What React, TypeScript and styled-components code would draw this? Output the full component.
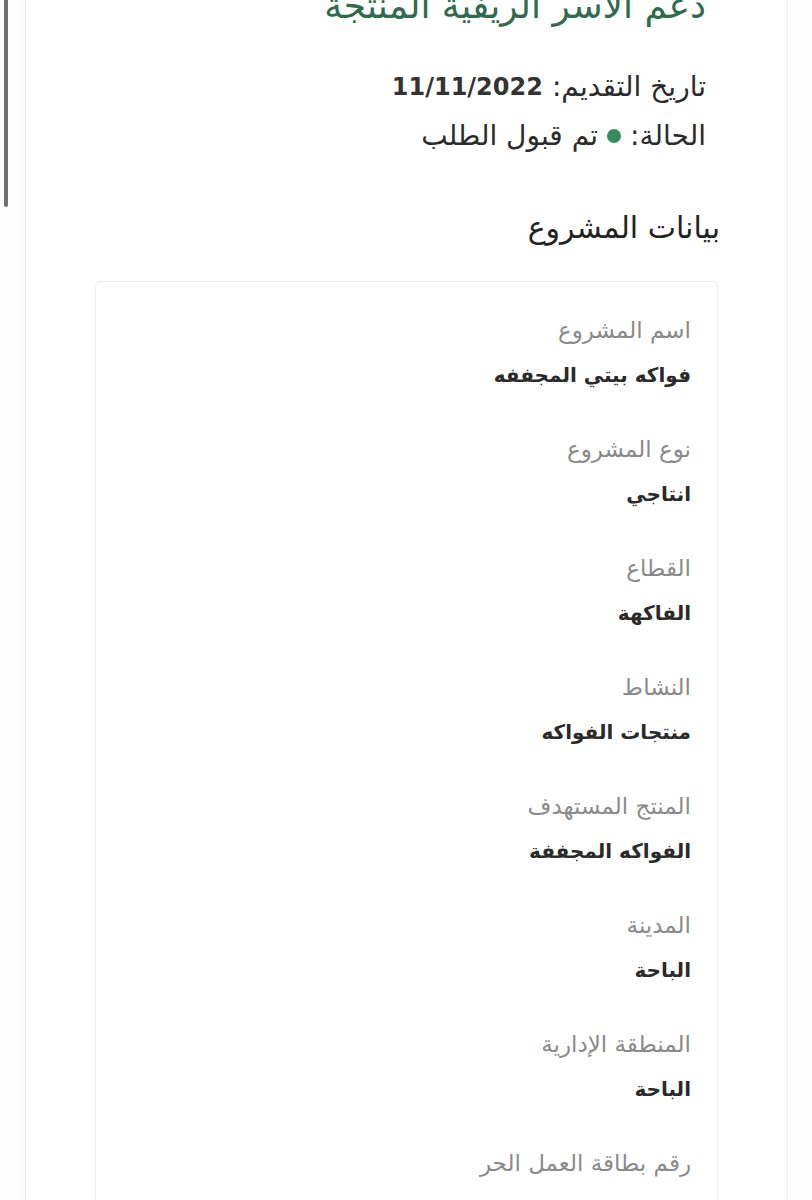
import styled, { createGlobalStyle } from 'styled-components'

const GlobalStyle = createGlobalStyle`
  html, body {
    margin: 0;
    padding: 0;
    background: #ffffff;
  }
  body {
    font-family: "DejaVu Sans", sans-serif;
    overflow: hidden;
  }
`

const Page = styled.div`
  position: relative;
  width: 812px;
  height: 1200px;
  overflow: hidden;
  background: #fdfdfd;
  direction: rtl;
`

const ScrollThumb = styled.div`
  position: absolute;
  top: 0;
  left: 4px;
  width: 4px;
  height: 207px;
  background: #707070;
  border-radius: 0 0 3px 3px;
`

const Card = styled.main`
  margin: 0 24px 0 25px;
  min-height: 1300px;
  background: #ffffff;
  border-left: 1px solid #ececec;
  border-right: 1px solid #ececec;
  box-shadow: 0 0 4px rgba(0, 0, 0, 0.04);
  padding: 0 69px;
`

const Title = styled.h1`
  margin: -16px 12px 0 0;
  font-size: 36px;
  line-height: 44px;
  font-weight: 400;
  color: #2f6b4e;
`

const Meta = styled.div`
  margin: 41px 12px 0 0;
  display: flex;
  flex-direction: column;
  gap: 13px;
`

const MetaLine = styled.div`
  display: flex;
  align-items: center;
  gap: 9px;
  font-size: 28px;
  line-height: 36px;
  color: #2b2b2b;
`

const Digits = styled.span`
  font-size: 24px;
  font-weight: 700;
  color: #333333;
`

const Dot = styled.span`
  display: inline-block;
  width: 14px;
  height: 14px;
  border-radius: 50%;
  background: #3b8a5c;
`

const SectionTitle = styled.h2`
  margin: 56px -2px 0 0;
  font-size: 30px;
  line-height: 36px;
  font-weight: 400;
  color: #222222;
`

const InfoCard = styled.section`
  margin-top: 35px;
  border: 1px solid #ededed;
  border-radius: 6px;
  box-shadow: 0 1px 3px rgba(0, 0, 0, 0.04);
  padding: 35px 26px 40px;
  display: flex;
  flex-direction: column;
  gap: 48px;
`

const Field = styled.div`
  display: flex;
  flex-direction: column;
  gap: 19px;
`

const Label = styled.span`
  font-size: 23px;
  line-height: 26px;
  color: #8a8a8a;
`

const Value = styled.span`
  font-size: 20px;
  line-height: 26px;
  font-weight: 700;
  color: #2a2a2a;
`

const fields = [
  { label: 'اسم المشروع', value: 'فواكه بيتي المجففه' },
  { label: 'نوع المشروع', value: 'انتاجي' },
  { label: 'القطاع', value: 'الفاكهة' },
  { label: 'النشاط', value: 'منتجات الفواكه' },
  { label: 'المنتج المستهدف', value: 'الفواكه المجففة' },
  { label: 'المدينة', value: 'الباحة' },
  { label: 'المنطقة الإدارية', value: 'الباحة' },
  { label: 'رقم بطاقة العمل الحر', value: '745123335' },
]

function App() {
  return (
    <Page>
      <GlobalStyle />
      <ScrollThumb />
      <Card>
        <Title>دعم الاسر الريفية المنتجة</Title>
        <Meta>
          <MetaLine>
            تاريخ التقديم: <Digits>11/11/2022</Digits>
          </MetaLine>
          <MetaLine>
            الحالة:
            <Dot />
            تم قبول الطلب
          </MetaLine>
        </Meta>
        <SectionTitle>بيانات المشروع</SectionTitle>
        <InfoCard>
          {fields.map((f) => (
            <Field key={f.label}>
              <Label>{f.label}</Label>
              <Value>{f.value}</Value>
            </Field>
          ))}
        </InfoCard>
      </Card>
    </Page>
  )
}

export default App
